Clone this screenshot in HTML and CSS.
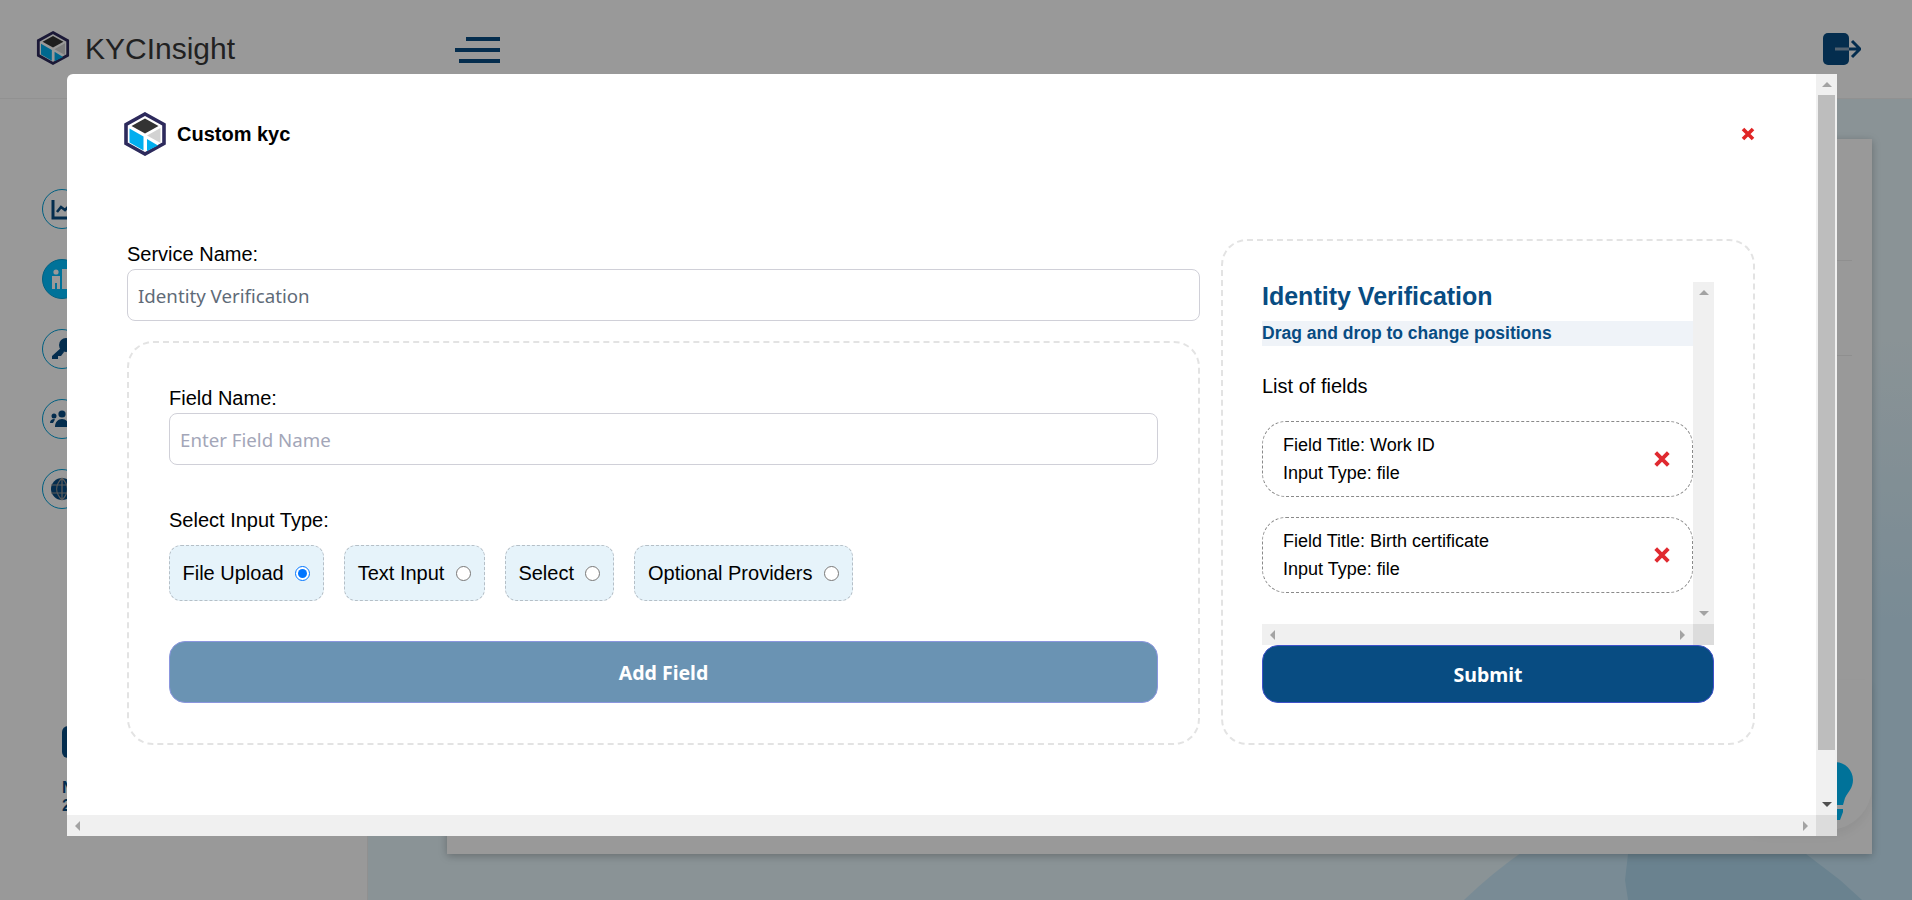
FILE: index.html
```html
<!DOCTYPE html>
<html lang="en">
<head>
<meta charset="utf-8">
<title>KYCInsight</title>
<link rel="stylesheet" href="styles.css">
</head>
<body>
<div class="page">
  <header class="topbar">
    <svg class="logo-small" viewBox="0 0 44 44"><use href="#cube"/></svg>
    <span class="brand">KYCInsight</span>
    <div class="burger"><i class="b1"></i><i class="b2"></i><i class="b3"></i></div>
    <svg class="logout" viewBox="0 0 38 32">
      <rect x="0" y="0" width="26" height="32" rx="5" fill="#084c82"/>
      <path d="M12 16H26" stroke="#8aa3bb" stroke-width="3" fill="none"/>
      <path d="M26 16H37M29 8l8 8-8 8" stroke="#084c82" stroke-width="3" fill="none"/>
    </svg>
  </header>
  <div class="main">
    <aside class="sidebar">
      <nav class="nav">
        <span class="nav-item"><svg viewBox="0 0 24 24"><path d="M3 3V21H24" fill="none" stroke="#084c82" stroke-width="3"/><path d="M7 15l4-5 4 3 6-6" fill="none" stroke="#084c82" stroke-width="2.6"/></svg></span>
        <span class="nav-item active"><svg viewBox="0 0 24 24"><circle cx="6" cy="5" r="2.6" fill="#fff"/><path d="M2 9h8v13H7v-6H5v6H2zM12 2h10v20H12z" fill="#fff"/></svg></span>
        <span class="nav-item"><svg viewBox="0 0 24 24"><circle cx="16" cy="8" r="7" fill="#084c82"/><path d="M12 10L2 19v3h6v-3h3l3-4z" fill="#084c82"/></svg></span>
        <span class="nav-item"><svg viewBox="0 0 24 24"><circle cx="12" cy="7" r="3.6" fill="#084c82"/><circle cx="4" cy="9" r="2.5" fill="#084c82"/><circle cx="20" cy="9" r="2.5" fill="#084c82"/><path d="M5 20c0-5 3-8 7-8s7 3 7 8zM0 16c0-3 2-4 4-4l1 .5L3 16zM24 16c0-3-2-4-4-4l-1 .5L21 16z" fill="#084c82"/></svg></span>
        <span class="nav-item"><svg viewBox="0 0 24 24"><circle cx="12" cy="12" r="11" fill="#084c82"/><path d="M1 8h22M1 16h22M12 1v22M12 1c-7 7-7 15 0 22M12 1c7 7 7 15 0 22" stroke="#999" stroke-width="1.2" fill="none"/></svg></span>
      </nav>
      <div class="side-foot">
        <div class="side-btn"></div>
        <p class="side-text">NIN<br>2024</p>
      </div>
    </aside>
    <section class="content">
      <span class="deco deco-light"></span>
      <span class="deco deco-dark"></span>
      <div class="card">
        <div class="card-row"></div>
        <div class="card-row tall"></div>
        <div class="bubble">
          <svg class="bulb" viewBox="0 0 36 58"><path d="M18 0C8 0 0 8 0 18c0 8 5 12 8 18l2 7h16l2-7c3-6 8-10 8-18C36 8 28 0 18 0z" fill="#00bfff"/><path d="M10 47h16v3l-3 8H13l-3-8z" fill="#00bfff"/></svg>
        </div>
      </div>
    </section>
  </div>
</div>

<div class="overlay">
  <div class="modal">
    <div class="modal-body">
      <div class="modal-head">
        <div class="modal-title">
          <svg class="logo-modal" viewBox="0 0 44 44">
            <g id="cube">
              <path d="M22 2L41 12.500V31.500L22 42L3 31.500V12.500Z" fill="#fff" stroke="#2d2a5c" stroke-width="3.600"/>
              <path d="M22 6.500L35.500 14L22 21.500L8.500 14Z" fill="#333"/>
              <path d="M6.500 16.500L20.500 24.500V38.500L6.500 30.500Z" fill="#00aeef"/>
              <path d="M24 23.500L37.500 16V31Z" fill="#d2d2d2"/>
              <path d="M24 27L35 33.500L24 39Z" fill="#00aeef"/>
            </g>
          </svg>
          <h1 class="title">Custom kyc</h1>
        </div>
        <svg class="close" viewBox="0 0 14 14"><path d="M2 2L12 12M12 2L2 12" stroke="#e02525" stroke-width="3.600" fill="none"/></svg>
      </div>

      <div class="columns">
        <div class="col-left">
          <label class="label">Service Name:</label>
          <input class="text-input" type="text" value="Identity Verification">
          <div class="panel field-panel">
            <label class="label">Field Name:</label>
            <input class="text-input" type="text" placeholder="Enter Field Name">
            <p class="label type-label">Select Input Type:</p>
            <div class="radios">
              <label class="radio"><span>File Upload</span><input type="radio" name="t" checked></label>
              <label class="radio"><span>Text Input</span><input type="radio" name="t"></label>
              <label class="radio"><span>Select</span><input type="radio" name="t"></label>
              <label class="radio"><span>Optional Providers</span><input type="radio" name="t"></label>
            </div>
            <button class="btn btn-faded" type="button">Add Field</button>
          </div>
        </div>

        <div class="panel preview">
          <div class="list-box">
            <div class="list-scroll">
              <h2 class="preview-title">Identity Verification</h2>
              <p class="hint">Drag and drop to change positions</p>
              <p class="list-title">List of fields</p>
              <div class="field-card">
                <div class="field-text">Field Title: Work ID<br>Input Type: file</div>
                <svg class="remove" viewBox="0 0 14 14"><path d="M1.500 1.500L12.500 12.500M12.500 1.500L1.500 12.500" stroke="#e02a30" stroke-width="3.400" fill="none"/></svg>
              </div>
              <div class="field-card">
                <div class="field-text">Field Title: Birth certificate<br>Input Type: file</div>
                <svg class="remove" viewBox="0 0 14 14"><path d="M1.500 1.500L12.500 12.500M12.500 1.500L1.500 12.500" stroke="#e02a30" stroke-width="3.400" fill="none"/></svg>
              </div>
            </div>
            <div class="vbar">
              <span class="sb-btn"><i class="tri up"></i></span>
              <span class="sb-btn"><i class="tri down"></i></span>
            </div>
            <div class="hbar">
              <span class="sb-btn"><i class="tri left"></i></span>
              <span class="sb-btn"><i class="tri right"></i></span>
            </div>
            <div class="sb-corner"></div>
          </div>
          <button class="btn btn-submit" type="button">Submit</button>
        </div>
      </div>
    </div>
    <div class="vbar">
      <span class="sb-btn"><i class="tri up"></i></span>
      <span class="sb-thumb"></span>
      <span class="sb-btn"><i class="tri down dark"></i></span>
    </div>
    <div class="hbar">
      <span class="sb-btn"><i class="tri left"></i></span>
      <span class="sb-btn"><i class="tri right"></i></span>
    </div>
    <div class="sb-corner"></div>
  </div>
</div>
</body>
</html>
```

FILE: styles.css
```css
* { box-sizing: border-box; }
html, body { margin: 0; height: 900px; overflow: hidden; }
body { font-family: "Liberation Sans", Arial, sans-serif; color: #000; background: #fff; }

.page { display: flex; flex-direction: column; height: 900px; }

/* Top bar behind the dialog */
.topbar { flex: 0 0 99px; display: flex; align-items: center; padding: 0 51px 0 36px; background: #fff; border-bottom: 1px solid #f2f2f2; position: relative; z-index: 2; }
.logo-small { width: 34px; height: 36px; margin-top: -3px; }
.brand { margin-left: 15px; font-size: 30px; line-height: 40px; color: #383838; margin-top: -1px; }
.burger { margin-left: 220px; width: 45px; display: flex; flex-direction: column; align-items: flex-end; gap: 7px; margin-top: 1px; }
.burger i { display: block; height: 4px; background: #084c82; }
.b1 { width: 34px; }
.b2 { width: 45px; }
.b3 { width: 41px; }
.logout { margin-left: auto; width: 38px; height: 32px; margin-top: -1px; }

/* Lower area */
.main { flex: 1; display: flex; min-height: 0; }
.sidebar { flex: 0 0 368px; background: #fff; border-right: 1px solid #f0f0f0; padding: 90px 0 0 42px; display: flex; flex-direction: column; }
.nav { display: flex; flex-direction: column; gap: 30px; }
.nav-item { width: 40px; height: 40px; border-radius: 50%; border: 1.5px solid #00a0d8; display: flex; align-items: center; justify-content: center; }
.nav-item svg { width: 24px; height: 24px; }
.nav-item.active { background: #00bfff; }
.side-foot { margin: 217px 0 0 20px; }
.side-btn { width: 120px; height: 32px; border-radius: 6px; background: #084c82; }
.side-text { margin: 21px 0 0; font-size: 16px; line-height: 18px; font-weight: 700; color: #084c82; }

.content { flex: 1; position: relative; overflow: hidden; padding: 40px 40px 46px 79px; display: flex; background: linear-gradient(180deg, #e6f5fa 0, #e6f5fa 30%, #cae8f8 65%) right top / 40px 100% no-repeat, #e6f5fa; }
.deco { position: absolute; }
.deco-light { left: 943px; top: 661px; width: 1000px; height: 1000px; border-radius: 50%; background: #cae8f8; }
.deco-dark { left: 1252px; top: 751px; width: 250px; height: 50px; background: #b1d9ee; clip-path: polygon(8px 4px, 5px 30px, 8px 50px, 242px 50px, 220px 30px, 190px 7px, 186px 4px); }
.card { flex: 1; position: relative; background: #fff; box-shadow: 0 2px 8px rgba(0, 0, 0, .25); padding: 0 20px 0 0; }
.card-row { height: 122px; border-bottom: 1px solid #eee; }
.card-row.tall { height: 95px; }
.bubble { position: absolute; right: 0; bottom: 24px; width: 150px; height: 150px; padding: 0 19px 10px 0; display: flex; align-items: flex-end; justify-content: flex-end; background: #fff; border-radius: 0 0 44px 44px; box-shadow: 0 6px 10px rgba(0, 0, 0, .05); }
.bulb { width: 36px; height: 58px; }

/* Dialog */
.overlay { position: fixed; inset: 0; z-index: 10; display: flex; padding: 74px 75px 64px 67px; background: rgba(0, 0, 0, .4); }
.modal { flex: 1; display: grid; grid-template-columns: 1749px 21px; grid-template-rows: 741px 21px; overflow: hidden; background: #fff; border-top-left-radius: 6px; }
.modal-body { overflow: hidden; }

.modal-head { display: flex; align-items: center; justify-content: space-between; padding: 38px 62px 0 56px; height: 81px; }
.modal-title { display: flex; align-items: center; gap: 10px; }
.logo-modal { width: 44px; height: 44px; display: block; }
.title { margin: 0; font-size: 20px; line-height: 24px; font-weight: 700; }
.close { width: 14px; height: 14px; margin-right: -1px; }

.columns { display: grid; grid-template-columns: 1073px 534px; column-gap: 21px; padding: 84px 61px 120px 60px; }

.label { display: block; margin: 0; font-size: 20px; line-height: 30px; }
.text-input { display: block; width: 100%; height: 52px; padding: 1px 10px 0; border: 1px solid #d0d0d8; border-radius: 8px; background: #fff; outline: 0; font: 400 18.700px "Noto Sans", sans-serif; color: #5f6b78; }
.text-input::placeholder { color: #a3a6b8; opacity: 1; }

.panel { border: 2px dashed #e3e3e3; border-radius: 26px; }
.field-panel { margin-top: 20px; height: 404px; padding: 40px; }
.type-label { margin-top: 40px; }

.radios { display: flex; gap: 20px; margin-top: 10px; }
.radio { height: 56px; padding: 0 13.250px 0 12.500px; display: flex; align-items: center; gap: 11.250px; border: 1px dashed #b5bfc7; border-radius: 12px; background: #e6f3fa; font-size: 20px; }
.radio input { width: 15px; height: 15px; margin: 0; flex: none; }

.btn { display: block; width: 100%; border: 1px solid #3f51c9; border-radius: 16px; background: #084c82; color: #fff; font: 700 19.500px "Noto Sans", sans-serif; }
.btn-faded { height: 62px; margin-top: 40px; opacity: .6; }
.btn-submit { height: 58px; }

.preview { height: 506px; padding: 41px 39px 40px; }
.list-box { height: 363px; display: grid; grid-template-columns: 431px 21px; grid-template-rows: 342px 21px; }
.list-scroll { overflow: hidden; }
.preview-title { margin: 0; font-size: 25px; line-height: 28px; font-weight: 700; color: #084c82; }
.hint { margin: 11px 0 0; height: 25px; font-size: 17.500px; line-height: 25px; font-weight: 700; color: #084c82; background: #eff3f8; }
.list-title { margin: 25px 0 0; font-size: 20px; line-height: 30px; }
.field-card { margin-top: 20px; height: 76px; padding: 0 22.500px 0 20px; display: flex; align-items: center; justify-content: space-between; border: 1px dashed #8a8a8a; border-radius: 24px; }
.field-text { font-size: 18px; line-height: 28px; }
.remove { width: 16px; height: 16px; flex: none; }

/* Scrollbars (drawn, because the content does not scroll) */
.vbar, .hbar { display: flex; justify-content: space-between; background: #f0f0f0; }
.vbar { flex-direction: column; }
.sb-btn { flex: none; width: 21px; height: 21px; display: flex; align-items: center; justify-content: center; }
.sb-thumb { flex: none; height: 655px; margin: 0 2px 44px; background: #bdbdbd; }
.sb-corner { background: #dcdcdc; }
.tri { display: block; width: 0; height: 0; border: 5px solid transparent; }
.tri.up { border-top-width: 0; border-bottom-color: #a3a3a3; }
.tri.down { border-bottom-width: 0; border-top-color: #a3a3a3; }
.tri.down.dark { border-top-color: #505050; }
.tri.left { border-left-width: 0; border-right-color: #a3a3a3; }
.tri.right { border-right-width: 0; border-left-color: #a3a3a3; }
```
